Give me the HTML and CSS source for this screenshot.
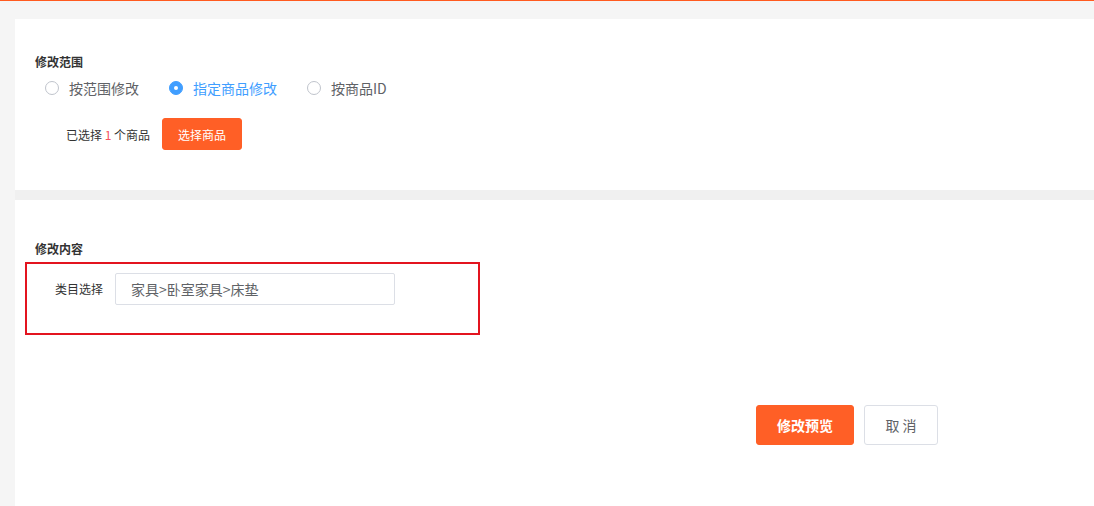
FILE: index.html
```html
<!DOCTYPE html>
<html lang="zh">
<head>
<meta charset="utf-8">
<link rel="stylesheet" href="styles.css">
</head>
<body>
<div class="topbar"></div>
<div class="main">
  <section class="card card-scope">
    <div class="title">修改范围</div>
    <div class="radios">
      <label class="radio"><span class="dot"></span><span class="rtext">按范围修改</span></label>
      <label class="radio checked"><span class="dot"></span><span class="rtext">指定商品修改</span></label>
      <label class="radio"><span class="dot"></span><span class="rtext">按商品ID</span></label>
    </div>
    <div class="picked">
      <span class="picked-text">已选择 <em class="num">1</em> 个商品</span>
      <button class="btn btn-orange btn-small">选择商品</button>
    </div>
  </section>
  <div class="divider"></div>
  <section class="card card-content">
    <div class="title">修改内容</div>
    <div class="highlight">
      <span class="field-label">类目选择</span>
      <div class="input">家具&gt;卧室家具&gt;床垫</div>
    </div>
    <div class="actions">
      <button class="btn btn-orange btn-large">修改预览</button>
      <button class="btn btn-plain btn-large">取 消</button>
    </div>
  </section>
</div>
</body>
</html>
```
FILE: styles.css
```css
* { box-sizing: border-box; }
html, body { margin: 0; padding: 0; }
body {
  background: #f5f5f5;
  font-family: "Noto Sans CJK SC", "Noto Sans", "Liberation Sans", sans-serif;
  color: #333;
  width: 1094px;
  height: 506px;
  overflow: hidden;
}
.topbar {
  height: 1px;
  background: #ff5a1f;
  box-shadow: 0 1px 6px rgba(0,0,0,0.06);
}
.main {
  margin: 18px 0 0 15px;
}
.card {
  background: #fff;
  padding-left: 20px;
}
.card-scope {
  padding-top: 33px;
  padding-bottom: 40px;
  height: 171px;
}
.title {
  font-size: 12px;
  font-weight: bold;
  line-height: 20px;
  color: #333;
}
.radios {
  display: flex;
  margin-top: 6px;
  margin-left: 10px;
  height: 20px;
  align-items: center;
}
.radio {
  display: flex;
  align-items: center;
  margin-right: 30px;
  font-size: 14px;
  color: #606266;
  line-height: 20px;
}
.dot {
  width: 14px;
  height: 14px;
  border-radius: 50%;
  border: 1px solid #c0c4cc;
  background: #fff;
  margin-right: 10px;
  display: flex;
  align-items: center;
  justify-content: center;
}
.radio.checked { color: #409eff; }
.radio.checked .dot {
  background: #409eff;
  border-color: #409eff;
}
.radio.checked .dot::after {
  content: "";
  width: 4px;
  height: 4px;
  border-radius: 50%;
  background: #fff;
}
.picked {
  display: flex;
  align-items: center;
  margin-top: 20px;
  margin-left: 31px;
}
.picked-text {
  font-size: 12px;
  color: #333;
  margin-right: 12px;
}
.num {
  font-style: normal;
  color: #f5515f;
}
.btn {
  font-family: inherit;
  border-radius: 3px;
  cursor: pointer;
  padding: 0;
}
.btn-orange {
  background: #ff5f26;
  border: 1px solid #ff5f26;
  color: #fff;
}
.btn-plain {
  background: #fff;
  border: 1px solid #dcdfe6;
  color: #606266;
}
.btn-small {
  width: 80px;
  height: 32px;
  font-size: 12px;
}
.btn-large {
  height: 40px;
  font-size: 14px;
}
.divider {
  height: 10px;
  background: #f0f0f0;
}
.card-content {
  padding-top: 39px;
  height: 320px;
  padding-left: 10px;
}
.card-content .title { margin-left: 10px; }
.highlight {
  width: 455px;
  height: 73px;
  border: 2px solid #e3141f;
  margin-top: 3px;
  padding: 9px 0 0 28px;
  display: flex;
  align-items: flex-start;
}
.field-label {
  font-size: 12px;
  color: #333;
  line-height: 32px;
  margin-right: 12px;
}
.input {
  width: 280px;
  height: 32px;
  border: 1px solid #dcdfe6;
  border-radius: 2px;
  padding-left: 15px;
  font-size: 14px;
  line-height: 30px;
  color: #606266;
}
.actions {
  display: flex;
  margin-top: 70px;
  margin-left: 731px;
}
.actions .btn-orange {
  width: 98px;
  margin-right: 10px;
  font-weight: bold;
}
.actions .btn-plain {
  width: 74px;
}
```
